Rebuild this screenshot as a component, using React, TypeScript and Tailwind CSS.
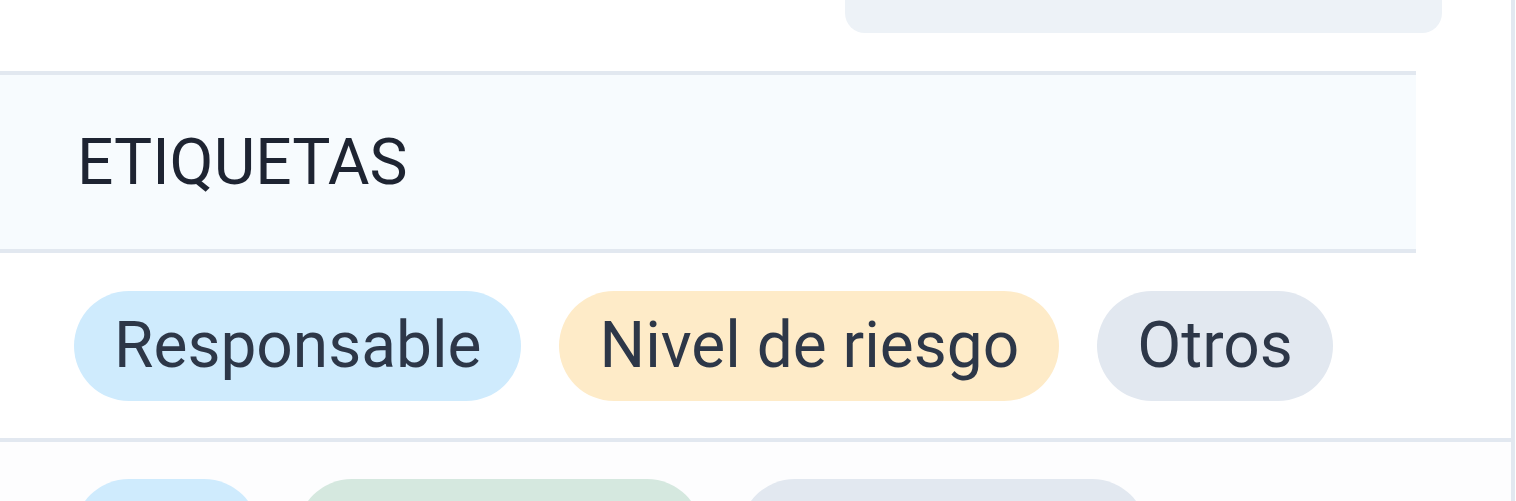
import React from 'react';

type Tag = { label: string; tone: string; width?: string };

const tags: Tag[] = [
  { label: 'Responsable', tone: 'bg-[#cfebfd]' },
  { label: 'Nivel de riesgo', tone: 'bg-[#feebc8]' },
  { label: 'Otros', tone: 'bg-[#e2e8f0]' },
];

const rowTags: Tag[] = [
  { label: 'Ana', tone: 'bg-[#cfebfd]', width: 'w-[185px]' },
  { label: 'Bajo impacto', tone: 'bg-[#d5e8df]', width: 'w-[405px]' },
  { label: 'Sin categoría', tone: 'bg-[#e2e8f0]', width: 'w-[407px]' },
];

function Pill({ tag }: { tag: Tag }) {
  return (
    <span
      className={`flex h-[110px] shrink-0 items-center justify-center whitespace-nowrap rounded-full px-10 text-[64px] leading-none text-[#2d3748] ${tag.tone} ${tag.width ?? ''}`}
    >
      {tag.label}
    </span>
  );
}

export default function App() {
  return (
    <div className="h-[501px] w-[1516px] overflow-hidden bg-white font-['Roboto',sans-serif]">
      <div className="flex h-full w-[1515px] flex-col border-r-4 border-[#e2e8f0]">
        {/* input box cut off at the top */}
        <div className="flex h-[71px] shrink-0 justify-end pr-[69px]">
          <div className="h-[33px] w-[597px] rounded-b-[20px] bg-[#edf2f7]" />
        </div>

        {/* section header */}
        <div className="mr-[95px] flex h-[182px] shrink-0 items-center border-y-4 border-[#e2e8f0] bg-[#f7fbfe] pl-[77px]">
          <h2 className="pt-[2px] text-[64px] leading-none font-normal text-[#1e2432]">ETIQUETAS</h2>
        </div>

        {/* filters */}
        <div className="flex h-[189px] shrink-0 items-center gap-[38px] border-b-4 border-[#e2e8f0] pl-[74px]">
          {tags.map((t) => (
            <Pill key={t.label} tag={t} />
          ))}
        </div>

        {/* first row of the list */}
        <div className="flex flex-1 items-start gap-[38px] bg-[#fdfdfe] pl-[74px] pt-[37px]">
          {rowTags.map((t) => (
            <Pill key={t.label} tag={t} />
          ))}
        </div>
      </div>
    </div>
  );
}
